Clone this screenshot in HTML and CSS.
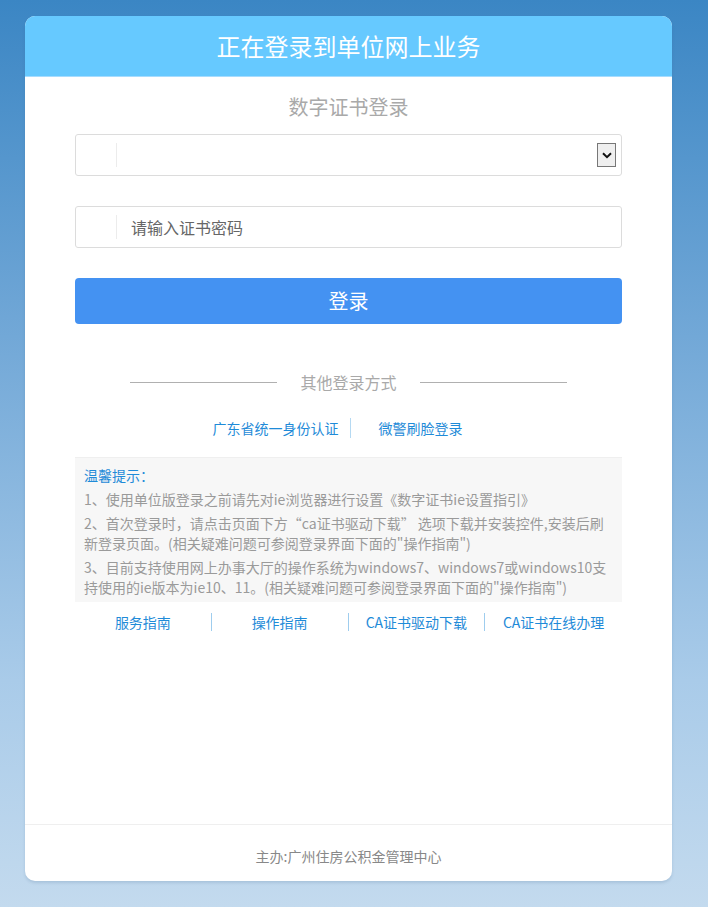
FILE: index.html
```html
<!DOCTYPE html>
<html lang="zh-CN">
<head>
<meta charset="utf-8">
<title>正在登录到单位网上业务</title>
<link rel="stylesheet" href="styles.css">
</head>
<body>
<div class="card">
  <div class="card-head">正在登录到单位网上业务</div>
  <div class="card-main">
    <div class="sub-title">数字证书登录</div>
    <div class="field">
      <span class="field-icon"></span>
      <span class="field-body"></span>
      <span class="select-btn">
        <svg width="10" height="7" viewBox="0 0 10 7"><path d="M1 1.2 L5 5.2 L9 1.2" fill="none" stroke="#111" stroke-width="2"/></svg>
      </span>
    </div>
    <div class="field field-pwd">
      <span class="field-icon"></span>
      <span class="field-body placeholder">请输入证书密码</span>
    </div>
    <div class="login-btn">登录</div>
    <div class="other">
      <span class="other-line"></span>
      <span class="other-text">其他登录方式</span>
      <span class="other-line"></span>
    </div>
    <div class="alt-links">
      <a class="alt-link alt-first">广东省统一身份认证</a>
      <a class="alt-link alt-second">微警刷脸登录</a>
    </div>
    <div class="tips">
      <div class="tips-title">温馨提示：</div>
      <p class="tip">1、使用单位版登录之前请先对ie浏览器进行设置《数字证书ie设置指引》</p>
      <p class="tip">2、首次登录时，请点击页面下方“ca证书驱动下载” 选项下载并安装控件,安装后刷新登录页面。(相关疑难问题可参阅登录界面下面的"操作指南")</p>
      <p class="tip">3、目前支持使用网上办事大厅的操作系统为windows7、windows7或windows10支持使用的ie版本为ie10、11。(相关疑难问题可参阅登录界面下面的"操作指南")</p>
    </div>
    <div class="bottom-links">
      <a class="b-link">服务指南</a>
      <a class="b-link">操作指南</a>
      <a class="b-link">CA证书驱动下载</a>
      <a class="b-link">CA证书在线办理</a>
    </div>
  </div>
  <div class="card-foot">主办:广州住房公积金管理中心</div>
</div>
</body>
</html>
```

FILE: styles.css
```css
html, body {
  margin: 0;
  padding: 0;
}
body {
  width: 708px;
  height: 907px;
  overflow: hidden;
  background: linear-gradient(to bottom, #3b86c4 0%, #6fa6d6 35%, #a9cbe9 75%, #c3daee 100%);
  font-family: "Noto Sans CJK SC", "Noto Sans", sans-serif;
  padding-top: 16px;
  box-sizing: border-box;
}
.card {
  margin-left: 25px;
  width: 647px;
  height: 865px;
  background: #fff;
  border-radius: 10px;
  overflow: hidden;
  display: flex;
  flex-direction: column;
  box-shadow: 0 2px 3px rgba(60, 100, 140, 0.18);
}
.card-head {
  height: 60px;
  line-height: 60px;
  background: #66c9ff;
  border-bottom: 1px solid #a6dcff;
  color: #fff;
  font-size: 24px;
  text-align: center;
}
.card-main {
  flex: 1;
  padding: 0 50px;
  display: flex;
  flex-direction: column;
}
.sub-title {
  margin-top: 15px;
  height: 30px;
  line-height: 30px;
  text-align: center;
  font-size: 20px;
  color: #a9a9a9;
}
.field {
  margin-top: 12px;
  height: 40px;
  border: 1px solid #dcdcdc;
  border-radius: 3px;
  display: flex;
  align-items: center;
}
.field-pwd {
  margin-top: 30px;
}
.field-icon {
  width: 40px;
  height: 24px;
  border-right: 1px solid #ececec;
}
.field-body {
  flex: 1;
  padding-left: 14px;
  font-size: 16px;
  line-height: 24px;
}
.placeholder {
  color: #666;
}
.select-btn {
  width: 17px;
  height: 22px;
  margin-right: 5px;
  border: 1px solid #777;
  background: #efefef;
  display: flex;
  align-items: center;
  justify-content: center;
}
.login-btn {
  margin-top: 30px;
  height: 46px;
  line-height: 46px;
  background: #4492f2;
  border-radius: 4px;
  color: #fff;
  font-size: 20px;
  text-align: center;
}
.other {
  margin-top: 46px;
  height: 24px;
  display: flex;
  align-items: center;
  justify-content: center;
  gap: 23px;
}
.other-line {
  width: 147px;
  height: 1px;
  background: #b0b0b0;
}
.other-text {
  font-size: 16px;
  color: #a9a9a9;
  line-height: 24px;
}
.alt-links {
  margin-top: 24px;
  height: 20px;
  display: flex;
  justify-content: center;
  align-items: center;
  padding-right: 22px;
}
.alt-link {
  font-size: 14px;
  line-height: 20px;
  color: #1f8bd8;
}
.alt-first {
  padding-right: 11px;
  border-right: 1px solid #b5d9f2;
}
.alt-second {
  margin-left: 28px;
}
.tips {
  margin-top: 19px;
  background: #f7f7f7;
  border-top: 1px solid #efefef;
  padding: 7px 9px 5px 9px;
}
.tips-title {
  font-size: 14px;
  line-height: 20px;
  color: #1f8bd8;
  margin-bottom: 4px;
}
.tip {
  margin: 0 0 4px 0;
  font-size: 14px;
  line-height: 20px;
  color: #9a9a9a;
}
.tip:last-child {
  margin-bottom: 0;
}
.bottom-links {
  margin-top: 11px;
  display: grid;
  grid-template-columns: repeat(4, 1fr);
  align-items: center;
}
.b-link {
  font-size: 14px;
  line-height: 18px;
  color: #1f8bd8;
  text-align: center;
  border-right: 1px solid #9fcdee;
}
.b-link:last-child {
  border-right: none;
}
.card-foot {
  height: 56px;
  border-top: 1px solid #efefef;
  line-height: 62px;
  text-align: center;
  font-size: 14px;
  color: #888;
}
```
